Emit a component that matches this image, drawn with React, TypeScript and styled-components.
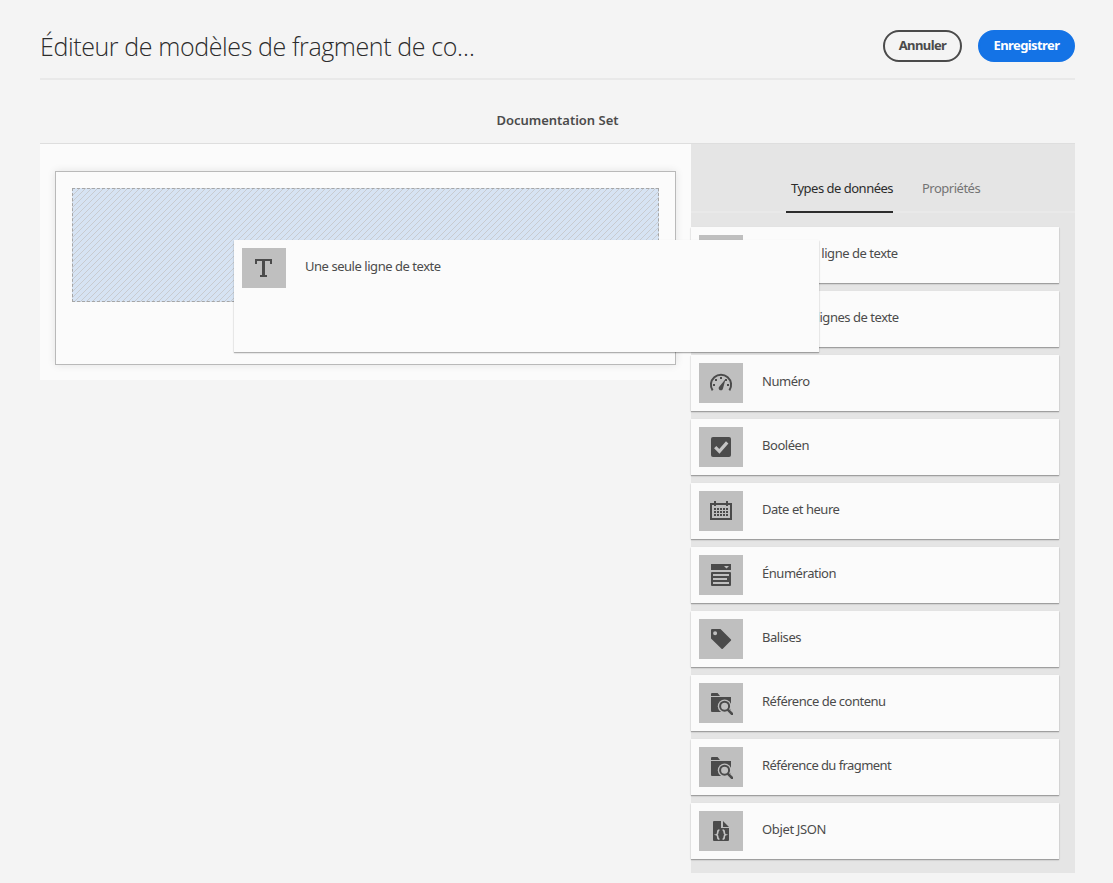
import React from "react";
import styled, { createGlobalStyle } from "styled-components";

const GlobalStyle = createGlobalStyle`
  *, *::before, *::after { box-sizing: border-box; }
  body {
    margin: 0;
    background: #f4f4f4;
    color: #4b4b4b;
    font-family: "Noto Sans", "Open Sans", sans-serif;
    font-size: 13px;
  }
`;

const Page = styled.div`
  height: 883px;
  padding: 0 38px 0 40px;
  overflow: hidden;
`;

const Header = styled.header`
  display: flex;
  align-items: flex-start;
  height: 80px;
  padding-top: 30px;
  border-bottom: 2px solid #e9e9e9;
`;

const Title = styled.h1`
  flex: 1;
  margin: 0;
  font-family: "Open Sans", "Noto Sans", sans-serif;
  font-size: 25px;
  font-weight: 300;
  line-height: 33px;
  letter-spacing: -0.39px;
  color: #2c2c2c;
  white-space: nowrap;
`;

const Button = styled.button<{ $primary?: boolean; $width: number }>`
  width: ${(p) => p.$width}px;
  height: 32px;
  margin-left: 16px;
  padding: 0 0 2px;
  border: 2px solid ${(p) => (p.$primary ? "#1473e6" : "#4b4b4b")};
  border-radius: 16px;
  background: ${(p) => (p.$primary ? "#1473e6" : "transparent")};
  color: ${(p) => (p.$primary ? "#fff" : "#4b4b4b")};
  font-family: inherit;
  font-size: 13px;
  font-weight: 700;
  letter-spacing: -0.6px;
  white-space: nowrap;
`;

const ModelName = styled.h2`
  height: 63px;
  margin: 0;
  padding-top: 30px;
  font-size: 13px;
  font-weight: 600;
  line-height: 20px;
  letter-spacing: -0.02px;
  text-align: center;
`;

const Workspace = styled.main`
  display: flex;
  align-items: flex-start;
  border-top: 1px solid #dedede;
`;

const Canvas = styled.section`
  flex: 1;
  height: 236px;
  padding: 27px 15px 15px;
  background: #fbfbfb;
`;

const FormArea = styled.div`
  position: relative;
  height: 194px;
  padding: 16px;
  border: 1px solid #b9b9b9;
  box-shadow: 0 0 8px rgba(0, 0, 0, 0.1);
`;

const DropZone = styled.div`
  height: 114px;
  border: 1px dashed #a6a6a6;
  background-color: #d6e3f3;
  background-image: linear-gradient(
    135deg,
    transparent 45%,
    #c8cbd0 45%,
    #c8cbd0 55%,
    transparent 55%
  );
  background-size: 6px 6px;
`;

const Sidebar = styled.aside`
  width: 384px;
  height: 729px;
  background: #e5e5e5;
`;

const Tabs = styled.nav`
  display: flex;
  justify-content: center;
  gap: 25px;
  height: 69px;
  padding-top: 27px;
  padding-left: 6px;
  border-bottom: 2px solid #e9e9e9;
`;

const Tab = styled.div<{ $active?: boolean; $width: number }>`
  width: ${(p) => p.$width}px;
  height: 42px;
  padding-top: 7px;
  padding-left: ${(p) => (p.$active ? 5 : 4)}px;
  border-bottom: 2px solid ${(p) => (p.$active ? "#2c2c2c" : "transparent")};
  color: ${(p) => (p.$active ? "#2c2c2c" : "#747474")};
  line-height: 20px;
  letter-spacing: -0.5px;
  white-space: nowrap;
`;

const TypeList = styled.div`
  display: flex;
  flex-direction: column;
  gap: 8px;
  padding: 14px 16px 0 0;
`;

const Card = styled.div`
  display: flex;
  align-items: flex-start;
  height: 56px;
  padding: 8px;
  background: #fbfbfb;
  box-shadow: 0 1px 1px rgba(0, 0, 0, 0.24), 0 1px 2px rgba(0, 0, 0, 0.12);
`;

const DraggedCard = styled(Card)`
  position: absolute;
  z-index: 2;
  left: 178px;
  top: 68px;
  width: 585px;
  height: 112px;
`;

const IconBox = styled.span`
  display: flex;
  align-items: center;
  justify-content: center;
  flex: none;
  width: 44px;
  height: 40px;
  margin-right: 19px;
  background: #bfbfbf;
  color: #4b4b4b;
`;

const Label = styled.span<{ $spacing?: number }>`
  padding-top: 8px;
  line-height: 20px;
  letter-spacing: ${(p) => p.$spacing ?? -0.46}px;
  white-space: nowrap;
`;

const Icon = ({ children }: { children: React.ReactNode }) => (
  <svg width="24" height="24" viewBox="0 0 24 24" fill="currentColor">
    {children}
  </svg>
);

const TextIcon = () => (
  <Icon>
    <path d="M3 3h17v5h-2V5h-5v14h2v2H8v-2h2V5H5v3H3z" />
  </Icon>
);

const GaugeIcon = () => (
  <Icon>
    <path
      d="M3.6 19.4A10.1 10.1 0 1 1 20.4 19.4"
      fill="none"
      stroke="currentColor"
      strokeWidth="2"
    />
    <path d="M16.6 8 14 17.6a2.2 2.2 0 1 1-3.8-1.9z" />
    <path d="M4 13h2v2H4zM6 8h2v2H6zM11 6h2v2h-2zM18 13h2v2h-2zM16 8h2v2h-2z" />
  </Icon>
);

const CheckIcon = () => (
  <Icon>
    <rect x="2" y="2" width="20" height="20" rx="2" />
    <path d="m6.2 12.2 4.2 4.2 7.8-9" fill="none" stroke="#c4c4c4" strokeWidth="3.2" />
  </Icon>
);

const CalendarIcon = () => (
  <Icon>
    <path
      fillRule="evenodd"
      d="M5 2h2v2h10V2h2v2h4v17H1V4h4zM3 6v13h18V6h-2v1h-2V6H7v1H5V6z"
    />
    <path d="M5 9h2v2H5zM8 9h2v2H8zM11 9h2v2h-2zM14 9h2v2h-2zM17 9h2v2h-2zM5 12h2v2H5zM8 12h2v2H8zM11 12h2v2h-2zM14 12h2v2h-2zM17 12h2v2h-2zM5 15h2v2H5zM8 15h2v2H8zM11 15h2v2h-2zM14 15h2v2h-2zM17 15h2v2h-2z" />
  </Icon>
);

const EnumIcon = () => (
  <Icon>
    <path fillRule="evenodd" d="M2 1h20v6H2zm13 2 2.5 2.5L20 3z" />
    <path
      fillRule="evenodd"
      d="M3 9h18a1 1 0 0 1 1 1v12a1 1 0 0 1-1 1H3a1 1 0 0 1-1-1V10a1 1 0 0 1 1-1zm1 2v2h16v-2zm0 4v2h14v-2zm0 4v2h16v-2z"
    />
  </Icon>
);

const TagIcon = () => (
  <Icon>
    <path
      fillRule="evenodd"
      d="M2 3a1 1 0 0 1 1-1h8.5L22 12.6a1 1 0 0 1 0 1l-8.2 8.2a1 1 0 0 1-1.3 0L2 11.5zm4.1 1.2a2 2 0 1 0 0 4 2 2 0 0 0 0-4z"
    />
  </Icon>
);

const FolderSearchIcon = () => (
  <Icon>
    <path d="M2 3a1 1 0 0 1 1-1h5.6L11 5H2zM2 6h20v15H3a1 1 0 0 1-1-1z" />
    <circle cx="15.6" cy="15.2" r="6.8" fill="#bfbfbf" />
    <path d="m18 18 7 7" stroke="#bfbfbf" strokeWidth="4" />
    <circle cx="15.6" cy="15.2" r="4.5" fill="none" stroke="currentColor" strokeWidth="2" />
    <path d="m19 18.8 4.2 4.2" stroke="currentColor" strokeWidth="2.6" strokeLinecap="round" />
  </Icon>
);

const JsonFileIcon = () => (
  <Icon>
    <path d="M4 3a1 1 0 0 1 1-1h7v7h8v12a1 1 0 0 1-1 1H5a1 1 0 0 1-1-1zM14 2l6 6h-6z" />
    <path
      d="M10.4 11.2c-1.5 0-1.6.6-1.6 1.9 0 1.6 0 2.2-1.2 2.6 1.2.4 1.2 1 1.2 2.6 0 1.3.1 1.9 1.6 1.9M13.6 11.2c1.5 0 1.6.6 1.6 1.9 0 1.6 0 2.2 1.2 2.6-1.2.4-1.2 1-1.2 2.6 0 1.3-.1 1.9-1.6 1.9"
      fill="none"
      stroke="#c4c4c4"
      strokeWidth="1.7"
    />
  </Icon>
);

const dataTypes = [
  { label: "Une seule ligne de texte", icon: <TextIcon /> },
  { label: "Plusieurs lignes de texte", icon: <TextIcon /> },
  { label: "Numéro", icon: <GaugeIcon /> },
  { label: "Booléen", icon: <CheckIcon /> },
  { label: "Date et heure", icon: <CalendarIcon /> },
  { label: "Énumération", icon: <EnumIcon /> },
  { label: "Balises", icon: <TagIcon /> },
  { label: "Référence de contenu", icon: <FolderSearchIcon />, spacing: -0.5 },
  { label: "Référence du fragment", icon: <FolderSearchIcon />, spacing: -0.57 },
  { label: "Objet JSON", icon: <JsonFileIcon />, spacing: -0.35 },
];

export default function App() {
  return (
    <>
      <GlobalStyle />
      <Page>
        <Header>
          <Title>Éditeur de modèles de fragment de co…</Title>
          <Button $width={79}>Annuler</Button>
          <Button $primary $width={97}>
            Enregistrer
          </Button>
        </Header>
        <ModelName>Documentation Set</ModelName>
        <Workspace>
          <Canvas>
            <FormArea>
              <DropZone />
              <DraggedCard>
                <IconBox>
                  <TextIcon />
                </IconBox>
                <Label>Une seule ligne de texte</Label>
              </DraggedCard>
            </FormArea>
          </Canvas>
          <Sidebar>
            <Tabs>
              <Tab $active $width={107}>
                Types de données
              </Tab>
              <Tab $width={68}>Propriétés</Tab>
            </Tabs>
            <TypeList>
              {dataTypes.map((type) => (
                <Card key={type.label}>
                  <IconBox>{type.icon}</IconBox>
                  <Label $spacing={type.spacing}>{type.label}</Label>
                </Card>
              ))}
            </TypeList>
          </Sidebar>
        </Workspace>
      </Page>
    </>
  );
}
